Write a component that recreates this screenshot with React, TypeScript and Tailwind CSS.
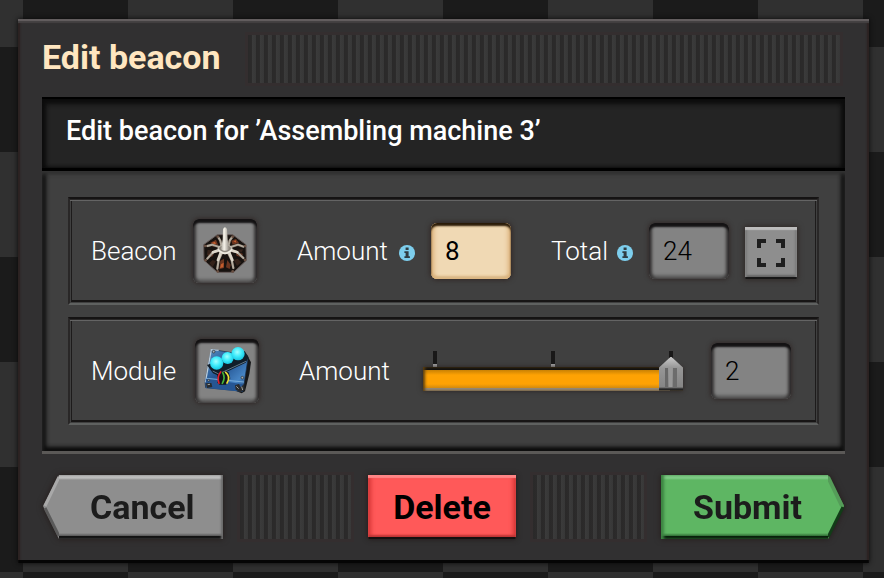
import { useState } from "react";
import type { ReactNode } from "react";

const INSET =
  "rounded-md bg-[#838383] shadow-[inset_0_4px_2px_#141213,inset_3px_0_3px_#3a3838,inset_-3px_0_3px_#3a3838,inset_0_-4px_3px_#616161,0_0_4px_1px_#322a29]";

function Ribs({ className }: { className: string }) {
  return (
    <div
      aria-hidden="true"
      className={`min-w-0 flex-1 bg-[repeating-linear-gradient(90deg,#2a2929_0px,#2c2b2b_4px,#3b3b3b_4px,#373737_8px)] outline-3 outline-[#342e2f] ${className}`}
    />
  );
}

function Groove({ children }: { children: ReactNode }) {
  return (
    <div className="border-2 border-[#292727] border-t-[#151313] border-b-[#5f6160] p-px shadow-[inset_0_1px_0_#2a2828,inset_0_2px_0_#646464]">
      <div className="mt-px flex h-[101px] items-center border-x border-b-2 border-x-[#1d1b1b] border-b-[#171515] px-[19px] text-[26px] leading-9 font-light text-white">
        {children}
      </div>
    </div>
  );
}

function Info() {
  return (
    <svg viewBox="0 0 16 16" className="mt-1 ml-2 size-4 shrink-0" aria-hidden="true">
      <circle cx="8" cy="8" r="8" fill="#7dceed" />
      <path d="M6.6 2.5h3v2.5h-3zM5.4 6.2h4.2v5h1.3v1.8H5.4v-1.8h1.2V8H5.4z" fill="#303c42" />
    </svg>
  );
}

const LEGS = [
  "M121 112 96 104 82 108",
  "M149 112 174 104 190 110",
  "M118 122 100 126 82 146",
  "M152 122 171 126 190 144",
  "M126 128 116 150 112 176",
  "M144 128 155 150 160 174",
  "M124 105 121 92 115 82",
  "M146 105 149 92 156 82",
];

function BeaconIcon() {
  return (
    <svg viewBox="39 27 192 192" className="size-16" aria-hidden="true">
      <defs>
        <linearGradient id="spire" x1="0" x2="1" y1="0" y2="0">
          <stop offset="0" stopColor="#aba69c" />
          <stop offset=".4" stopColor="#f6f3ea" />
          <stop offset="1" stopColor="#969087" />
        </linearGradient>
      </defs>
      <path d="M112 74 158 74 198 104 199 151 161 187 112 187 72 151 71 104Z" fill="#17120f" stroke="#665b59" strokeWidth="3" />
      <path d="M91 98 108 89 114 104 99 111ZM154 92 168 87 177 99 158 104ZM85 129 105 122 98 139 83 144ZM166 122 189 132 183 142 170 137ZM121 152 132 146 132 174 118 178ZM142 150 152 164 149 177 138 172Z" fill="#6b3520" />
      <path d="M96 98 105 95 108 103 98 106ZM123 163 131 158 130 172 120 174ZM160 94 167 91 169 98Z" fill="#c45d2d" />
      <path d="M83 119 101 122 80 137ZM171 119 190 118 184 128ZM98 150 108 154 98 171 88 159ZM161 150 173 146 184 157 171 168Z" fill="#34221a" />
      {LEGS.map((d) => (
        <g key={d} fill="none" strokeLinecap="round" strokeLinejoin="round">
          <path d={d} stroke="#493c34" strokeWidth="8" />
          <path d={d} stroke="#b3ab9e" strokeWidth="6" />
        </g>
      ))}
      <path
        d="M122 128 114 150M148 128 157 150M115 121 99 127M155 121 172 127"
        stroke="#ddd7ca"
        strokeWidth="8"
        strokeLinecap="round"
      />
      <g fill="#6a5042">
        <circle cx="113" cy="80" r="4" />
        <circle cx="158" cy="80" r="4" />
        <circle cx="76" cy="108" r="4" />
        <circle cx="195" cy="108" r="4" />
        <circle cx="77" cy="151" r="4" />
        <circle cx="195" cy="150" r="4" />
        <circle cx="113" cy="184" r="4" />
        <circle cx="158" cy="184" r="4" />
      </g>
      <ellipse cx="135" cy="118" rx="23" ry="15" fill="#c2bcb0" />
      <ellipse cx="135" cy="116" rx="18" ry="10" fill="#8d877e" />
      <path d="M114 118q21 24 42 0" fill="none" stroke="#eeeae0" strokeWidth="5" />
      <path d="M129 57q6-10 12 0l2 31 4 30q-12 9-24 0l5-30Z" fill="url(#spire)" />
    </svg>
  );
}

function ModuleIcon() {
  return (
    <svg viewBox="45 27 192 192" className="size-16" aria-hidden="true">
      <defs>
        <linearGradient id="plate" x1="0" x2="1" y1="0" y2="1">
          <stop offset="0" stopColor="#5a93c4" />
          <stop offset=".45" stopColor="#235492" />
          <stop offset=".75" stopColor="#4684c4" />
          <stop offset="1" stopColor="#1c3d6c" />
        </linearGradient>
        <radialGradient id="orb" cx=".45" cy=".38" r=".65">
          <stop offset="0" stopColor="#a2ffff" />
          <stop offset=".5" stopColor="#3fecfb" />
          <stop offset="1" stopColor="#14c2df" />
        </radialGradient>
      </defs>
      <path d="M200 73 213 97 208 132 195 184 185 190 170 184Z" fill="#161719" />
      <path d="M94 58 192 74 204 84 189 184 77 173 75 155Z" fill="url(#plate)" stroke="#182c46" strokeWidth="2" />
      <path d="M76 157 94 59 116 61" fill="none" stroke="#b9cddd" strokeWidth="4" />
      <path d="M77 146 189 163 187 185 78 174Z" fill="#265693" />
      <path d="M79 145 192 156" stroke="#78abd8" strokeWidth="3" />
      <path d="M81 105 194 63 206 82 197 98 116 137 99 130Z" fill="#101d29" />
      <path d="M98 123 116 132 198 94" fill="none" stroke="#607587" strokeWidth="3" />
      <circle cx="110" cy="99" r="20" fill="url(#orb)" />
      <circle cx="143" cy="84" r="18" fill="url(#orb)" />
      <circle cx="174" cy="71" r="20" fill="url(#orb)" />
      <path d="M112 158Q117 149 111 137L121 126 146 127 151 145 138 164 119 164Z" fill="#10141a" />
      <g fill="none" strokeLinecap="round" strokeWidth="5">
        <path d="M122 126q-12 14-5 34" stroke="#e01f2c" />
        <path d="M128 128q9 15-1 32" stroke="#44b838" />
        <path d="M137 127q16 13 4 32" stroke="#f0e338" />
      </g>
      <g fill="#a5b0b7" stroke="#25282c" strokeWidth="2">
        <circle cx="101" cy="65" r="4" />
        <circle cx="187" cy="143" r="4" />
        <circle cx="86" cy="151" r="3" />
      </g>
      <path d="M78 160 94 159 97 171 81 174ZM165 166 177 162 182 172 192 162 194 179 181 187 167 179Z" fill="#292b2d" />
      <path d="M83 164 90 163M169 169 176 176M185 170 188 180" stroke="#a4a49d" strokeWidth="3" />
    </svg>
  );
}

function Slot({ label, children }: { label: string; children: ReactNode }) {
  return (
    <button type="button" aria-label={label} className={`size-16 shrink-0 ${INSET}`}>
      {children}
    </button>
  );
}

export default function App() {
  const [beacons, setBeacons] = useState("8");
  const [modules, setModules] = useState(2);

  return (
    <main className="min-h-screen bg-[conic-gradient(#1b1b1b_25%,#303030_0_50%,#1b1b1b_0_75%,#303030_0)] bg-[length:210px_210px] bg-[position:23px_47px] pt-[19px] pr-[15px] pb-[15px] pl-[18px] font-['Roboto','Liberation_Sans',sans-serif]">
      <section className="bg-[#313031] px-6 pt-4 pb-6 shadow-[inset_0_2px_0_#625d5e,inset_0_4px_1px_#454243,inset_0_-3px_0_#050505,inset_2px_0_2px_#2a201f,inset_-2px_0_2px_#2a201f,0_0_5px_#080808]">
        <header className="flex h-12 items-center gap-[27px] pr-[5px]">
          <h1 className="shrink-0 pb-1 text-[34px] leading-10 font-bold text-[#ffe6c0]">Edit beacon</h1>
          <Ribs className="h-12" />
        </header>

        <div className="mt-[14px] border-t-2 border-b-3 border-t-black border-b-[#5b5957] bg-[#404040]">
          <h2 className="h-[72px] border-b-3 border-black bg-[#242424] px-6 pt-3.5 text-[27px] leading-9 font-medium text-white shadow-[inset_0_5px_5px_#0c0c0c,inset_4px_0_4px_#0c0c0c,inset_-4px_0_4px_#0c0c0c]">
            Edit beacon for ’Assembling machine 3’
          </h2>
          <div className="flex flex-col gap-3 p-[26px] shadow-[inset_0_3px_4px_#353535,inset_4px_0_4px_#0d0d0d,inset_-4px_0_4px_#0d0d0d,inset_0_-4px_4px_#0d0d0d]">
            <Groove>
              <span className="w-[102px] shrink-0">Beacon</span>
              <Slot label="Beacon">
                <BeaconIcon />
              </Slot>
              <label htmlFor="beacons" className="ml-10 flex w-[118px] shrink-0 items-center justify-between">
                Amount
                <Info />
              </label>
              <input
                id="beacons"
                value={beacons}
                onChange={(e) => setBeacons(e.target.value)}
                className="ml-4 h-14 w-20 shrink-0 rounded-md bg-[#f0d9b4] px-3.5 font-normal text-black shadow-[inset_0_3px_2px_#2a1b08,inset_3px_0_4px_#dcb27a,inset_-3px_0_4px_#dcb27a,inset_0_-3px_2px_#d9bd91,0_0_5px_1px_#302624] outline-none"
              />
              <label htmlFor="total" className="ml-10 flex w-[82px] shrink-0 items-center justify-between">
                Total
                <Info />
              </label>
              <div className="ml-4 flex items-end gap-4">
                <input id="total" readOnly value="24" className={`h-14 w-20 shrink-0 px-3.5 text-black outline-none ${INSET}`} />
                <button
                  type="button"
                  aria-label="Select beacons"
                  className="flex size-[52px] shrink-0 items-center justify-center bg-[#8e8e8e] shadow-[inset_0_3px_1px_#bdbdbd,inset_0_-2px_0_#171616,inset_2px_0_2px_#7c7c7c,inset_-2px_0_2px_#7c7c7c,inset_0_-4px_2px_#666,0_0_5px_1px_#302826]"
                >
                  <svg viewBox="0 0 28 28" className="size-7" fill="none" stroke="#1e1e1e" strokeWidth="4" aria-hidden="true">
                    <path d="M2 9V2h7M19 2h7v7M26 19v7h-7M9 26H2v-7" />
                  </svg>
                </button>
              </div>
            </Groove>

            <Groove>
              <span className="w-[104px] shrink-0">Module</span>
              <Slot label="Module">
                <ModuleIcon />
              </Slot>
              <label htmlFor="modules" className="ml-10 w-[96px] shrink-0">
                Amount
              </label>
              <div className="ml-7 w-[260px] shrink-0">
                <div aria-hidden="true" className="flex h-4 justify-between px-2.5">
                  <i className="w-1 border-b-3 border-[#aaa] bg-[#191818]" />
                  <i className="w-1 border-b-3 border-[#aaa] bg-[#191818]" />
                  <i className="w-1 border-b-3 border-[#aaa] bg-[#191818]" />
                </div>
                <input
                  id="modules"
                  type="range"
                  min={0}
                  max={2}
                  value={modules}
                  onChange={(e) => setModules(Number(e.target.value))}
                  style={{ backgroundSize: `${(modules / 2) * 95}% 100%` }}
                  className="relative block h-6 w-full appearance-none bg-[linear-gradient(#111_0_3px,#c98104_3px,#fea204_8px,#fea204_17px,#d08910_21px,#958978_21px)] bg-no-repeat shadow-[inset_2px_0_3px_#5c3f10,0_0_5px_#2c2523] outline-none [&::-webkit-slider-runnable-track]:h-6 [&::-webkit-slider-thumb]:-mt-2.5 [&::-webkit-slider-thumb]:h-[34px] [&::-webkit-slider-thumb]:w-6 [&::-webkit-slider-thumb]:appearance-none [&::-webkit-slider-thumb]:bg-[linear-gradient(90deg,transparent_6px,#686868_6px_9px,transparent_9px_10px,#989898_10px_13px,transparent_13px_14px,#6c6c6c_14px_18px,transparent_18px),linear-gradient(#c9c9c9,#969696_11px,#858585_30px,#242424_32px)] [&::-webkit-slider-thumb]:bg-[length:100%_19px,100%_100%] [&::-webkit-slider-thumb]:bg-[position:0_11px,0_0] [&::-webkit-slider-thumb]:bg-no-repeat [&::-webkit-slider-thumb]:[clip-path:polygon(50%_0,100%_32%,100%_100%,0_100%,0_32%)]"
                />
              </div>
              <input
                aria-label="Module amount"
                readOnly
                value={modules}
                className={`ml-7 h-14 w-20 shrink-0 px-3.5 text-black outline-none ${INSET}`}
              />
            </Groove>
          </div>
        </div>

        <footer className="mt-[21px] flex h-16 gap-[17px] text-[34px] leading-10 font-bold text-[#1c1c1c]">
          <button type="button" className="flex w-[181px] shrink-0 drop-shadow-[0_0_3px_#241b19]">
            <svg viewBox="0 0 17 64" className="h-16 w-[17px] shrink-0" aria-hidden="true">
              <path d="M17 0 1 31 17 64Z" fill="#8e8e8e" />
              <path d="M17 2 3 31" stroke="#a9a9a9" strokeWidth="3" />
              <path d="M3 33 17 61" stroke="#5a5a5a" strokeWidth="3" />
            </svg>
            <span className="flex h-full flex-1 items-center bg-[linear-gradient(#bcbcbc_0_3px,#8e8e8e_5px,#8e8e8e_58px,#555_61px,#121212_61px)] pl-[31px] shadow-[inset_-2px_0_2px_#6b6b6b]">
              Cancel
            </span>
          </button>
          <Ribs className="h-16" />
          <button
            type="button"
            className="w-[148px] shrink-0 bg-[#ff5959] text-black shadow-[inset_0_3px_1px_#ff8585,inset_0_-2px_0_#161010,inset_0_-4px_2px_#bd3535,inset_3px_0_4px_#d63737,inset_-3px_0_4px_#d63737,0_0_5px_#201817]"
          >
            Delete
          </button>
          <Ribs className="h-16" />
          <button type="button" className="flex w-[184px] shrink-0 drop-shadow-[0_0_3px_#241b19]">
            <span className="flex h-full flex-1 items-center bg-[linear-gradient(#80cc87_0_3px,#5eb663_5px,#5eb663_58px,#2f6a34_61px,#071c0a_61px)] pl-[32px] shadow-[inset_3px_0_3px_#3c8442]">
              Submit
            </span>
            <svg viewBox="0 0 17 64" className="h-16 w-[17px] shrink-0" aria-hidden="true">
              <path d="M0 0 16 31 0 64Z" fill="#5eb663" />
              <path d="M0 2 14 31" stroke="#559c59" strokeWidth="4" />
              <path d="M15 32 0 62" stroke="#123c18" strokeWidth="3" />
            </svg>
          </button>
        </footer>
      </section>
    </main>
  );
}
